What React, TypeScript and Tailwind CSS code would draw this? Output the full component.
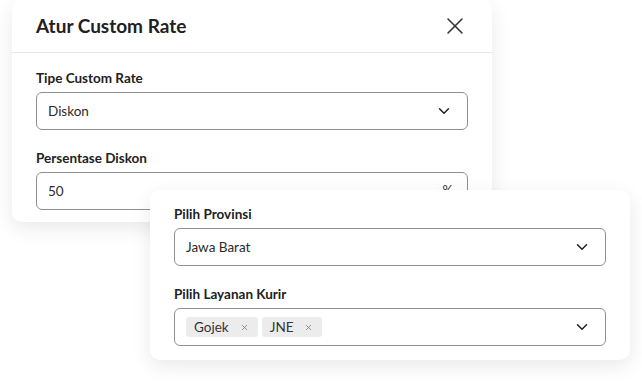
import { X, ChevronDown } from "lucide-react";

function Label({ children }: { children: React.ReactNode }) {
  return <div className="text-[13.5px] font-bold leading-[18px] text-[#212121]">{children}</div>;
}

function Field({ children, right }: { children: React.ReactNode; right?: React.ReactNode }) {
  return (
    <div className="mt-[5px] h-[38px] rounded-[6px] border border-[#8f8f8f] flex items-center justify-between pl-[11px] pr-[14px]">
      <div className="flex items-center gap-[4px] text-[13.5px] text-[#2b2b2b]">{children}</div>
      {right ?? <ChevronDown className="w-[18px] h-[18px] text-[#222]" strokeWidth={2} />}
    </div>
  );
}

function Chip({ text }: { text: string }) {
  return (
    <span className="h-[20px] pl-[8px] pr-[9px] rounded-[3px] bg-[#ececec] flex items-center gap-[11px] text-[13.5px] text-[#333]">
      {text}
      <X className="w-[9px] h-[9px] text-[#777]" strokeWidth={2} />
    </span>
  );
}

export default function App() {
  return (
    <div className="w-[642px] h-[384px] bg-white overflow-hidden" style={{ fontFamily: "Lato, 'Noto Sans', sans-serif" }}>
      <div className="flex flex-col">
        {/* ── Modal: Atur Custom Rate ── */}
        <div className="ml-[12px] w-[480px] h-[222px] bg-white rounded-[10px] shadow-[0_6px_20px_rgba(0,0,0,0.09)] overflow-hidden">
          <div className="h-[53px] border-b border-[#e8e8e8] flex items-center justify-between pl-[24px] pr-[23px]">
            <div className="text-[19px] font-bold text-[#212121]">Atur Custom Rate</div>
            <X className="w-[28px] h-[28px] text-[#333]" strokeWidth={1.3} />
          </div>
          <div className="px-[24px] pt-[16px]">
            <Label>Tipe Custom Rate</Label>
            <Field>Diskon</Field>
            <div className="mt-[19px]">
              <Label>Persentase Diskon</Label>
              <Field right={<span className="text-[13px] text-[#333]">%</span>}>50</Field>
            </div>
          </div>
        </div>

        {/* ── Card: Provinsi & Kurir ── */}
        <div className="relative -mt-[32px] ml-[150px] w-[480px] h-[170px] bg-white rounded-[10px] shadow-[0_6px_20px_rgba(0,0,0,0.09)] px-[24px] pt-[15px]">
          <Label>Pilih Provinsi</Label>
          <Field>Jawa Barat</Field>
          <div className="mt-[19px]">
            <Label>Pilih Layanan Kurir</Label>
            <Field>
              <Chip text="Gojek" />
              <Chip text="JNE" />
            </Field>
          </div>
        </div>
      </div>
    </div>
  );
}
